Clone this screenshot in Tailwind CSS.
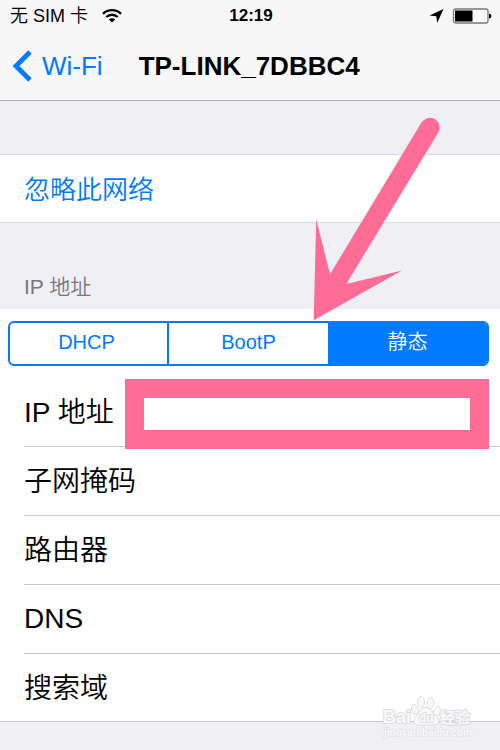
<!DOCTYPE html>
<html lang="zh-CN">
<head>
<meta charset="utf-8">
<meta name="viewport" content="width=device-width, initial-scale=1">
<title>TP-LINK_7DBBC4</title>
<script src="https://cdn.jsdelivr.net/npm/@tailwindcss/browser@4"></script>
</head>
<body class="relative min-h-screen overflow-x-hidden bg-[#efeff4] font-['Liberation_Sans','Noto_Sans_CJK_SC',sans-serif] text-black">
  <header class="border-b border-[#b2b2b6] bg-[#f7f7f7]">
    <div class="grid h-8 grid-cols-3 items-center pr-2 pl-2.5 text-lg">
      <div class="flex items-center gap-3.5 whitespace-nowrap">
        <span class="font-[350]">无 SIM 卡</span>
        <svg class="h-4 w-5" viewBox="0 0 20 16" fill="none" stroke="#000" stroke-width="2.4" aria-label="Wi-Fi">
          <path d="M1 5.8C6 .9 14 .9 19 5.8"/>
          <path d="M4.3 9C7.6 5.9 12.4 5.9 15.7 9"/>
          <path d="M10 14.6 6.8 11.5Q10 9 13.2 11.5Z" fill="#000" stroke="none"/>
        </svg>
      </div>
      <div class="text-center text-[17px] font-bold">12:19</div>
      <div class="flex items-center justify-end gap-2">
        <svg class="h-4 w-4" viewBox="0 0 16 16" aria-label="定位"><path d="M15.500 1 9.200 15 8.300 8.200 1.500 7.400Z"/></svg>
        <svg class="h-4 w-10" viewBox="0 0 40 16" aria-label="电量">
          <rect x="1.500" y="1" width="34.500" height="14" rx="2" fill="#fafafa" stroke="#777" stroke-width="1.300"/>
          <rect x="3" y="2.500" width="17.500" height="11"/>
          <path d="M37 5.500Q39.500 6 39.500 8T37 10.500Z"/>
        </svg>
      </div>
    </div>
    <nav class="flex h-[68px] items-center px-3">
      <a href="#" class="flex items-center gap-2.5 text-[26px] text-[#007aff]">
        <svg class="h-8 w-5" viewBox="0 0 20 32" fill="none" stroke="currentColor" stroke-width="4.800" aria-hidden="true"><path d="M18 2 4 16 18 30"/></svg>
        <span>Wi-Fi</span>
      </a>
      <h1 class="ml-9 text-[26px] font-bold">TP-LINK_7DBBC4</h1>
    </nav>
  </header>

  <main>
    <section class="mt-[53px] border-y border-[#dcdce0] bg-white">
      <button type="button" class="flex h-[67px] w-full items-center px-6 pt-1 text-[26px] font-[350] text-[#007aff]">忽略此网络</button>
    </section>

    <h2 class="flex h-[86px] items-end px-6 pb-1.5 text-[21px] leading-8 font-[350] text-[#77777c]">IP 地址</h2>

    <section class="border-b border-[#c8c7cc] bg-white pt-3">
      <div class="mr-[11px] ml-2 grid h-[45px] grid-cols-3 overflow-hidden rounded-md border-2 border-[#007aff] text-xl font-[350] text-[#007aff]">
        <button type="button" class="border-r-2 border-[#007aff] pr-1 pb-1">DHCP</button>
        <button type="button" class="pb-1">BootP</button>
        <button type="button" class="bg-[#007aff] pb-1 text-white" aria-pressed="true">静态</button>
      </div>
      <div class="pl-6 text-[28px] font-[350]">
        <div class="relative mt-3 flex h-[69px] items-center border-b border-[#c8c7cc] pt-0.5">
          <label for="ip" class="w-[119px] shrink-0">IP 地址</label>
          <input id="ip" type="text" class="mr-8 h-8 min-w-0 flex-1 outline-none">
          <div class="pointer-events-none absolute top-px right-[11px] left-[101px] h-[70px] border-[19px] border-[#ff6d96]"></div>
        </div>
        <div class="flex h-[69px] items-center border-b border-[#c8c7cc] pt-0.5">
          <label for="mask" class="w-[119px] shrink-0">子网掩码</label>
          <input id="mask" type="text" class="mr-8 h-8 min-w-0 flex-1 outline-none">
        </div>
        <div class="flex h-[69px] items-center border-b border-[#c8c7cc] pt-0.5">
          <label for="router" class="w-[119px] shrink-0">路由器</label>
          <input id="router" type="text" class="mr-8 h-8 min-w-0 flex-1 outline-none">
        </div>
        <div class="flex h-[69px] items-center border-b border-[#c8c7cc]">
          <label for="dns" class="w-[119px] shrink-0">DNS</label>
          <input id="dns" type="text" class="mr-8 h-8 min-w-0 flex-1 outline-none">
        </div>
        <div class="flex h-[67px] items-center pt-0.5">
          <label for="search" class="w-[119px] shrink-0">搜索域</label>
          <input id="search" type="text" class="mr-8 h-8 min-w-0 flex-1 outline-none">
        </div>
      </div>
    </section>
  </main>

  <!-- Pointer to the BootP / static segments -->
  <svg class="pointer-events-none absolute top-[110px] left-[310px] h-[220px] w-[100px] overflow-visible" viewBox="310 110 100 220" fill="#ff6d96" aria-hidden="true">
    <path d="M313.700 320.300 316.200 219 330 274.300 421.300 122.700A9.700 9.700 0 0 1 438.300 132.500L346.300 284 402 270.500Z"/>
  </svg>

  <!-- Watermark -->
  <div class="pointer-events-none absolute top-[694px] right-[26px] w-[92px]">
    <svg class="h-12 w-full overflow-visible" viewBox="0 0 92 48" fill="#f8f8f9" stroke="#dedee1" stroke-width="1" aria-hidden="true">
      <ellipse cx="39" cy="8" rx="3.500" ry="5.500"/>
      <ellipse cx="48.500" cy="9" rx="3.500" ry="5.500" transform="rotate(10 48 9)"/>
      <ellipse cx="33" cy="15.500" rx="3.200" ry="5" transform="rotate(-15 33 16)"/>
      <ellipse cx="55" cy="17" rx="3.200" ry="5" transform="rotate(15 54 17)"/>
      <path d="M43.500 13.500C38 14 37 19 34 22S31 31 36 31H52C58 31 58 26 54 22S49 13.500 43.500 13.500Z"/>
      <g font-family="Liberation Sans, Noto Sans CJK SC, sans-serif" font-weight="700" paint-order="stroke">
        <text x="1" y="29" font-size="18" stroke-width="2">Bai</text>
        <text x="37" y="28" font-size="12" stroke-width="2">du</text>
        <text x="58" y="29" font-size="15" stroke-width="2">经验</text>
        <text x="2" y="42" font-size="10" stroke-width="1">jingyan.baidu.com</text>
      </g>
    </svg>
  </div>
</body>
</html>
